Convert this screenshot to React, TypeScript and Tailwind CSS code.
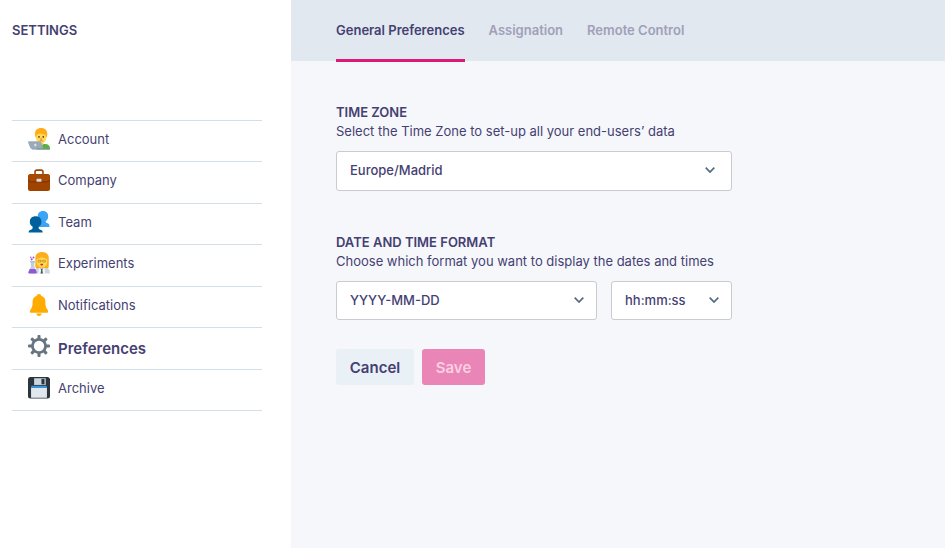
import type { ReactNode } from 'react';

function AccountIcon() {
  return (
    <svg viewBox="0 0 36 36" className="size-[22px]" aria-hidden="true">
      <path fill="#5BAF45" d="M14 34v-3c0-4 4-5 7-5h7c5 0 8 3 8 7v2H14z" />
      <path fill="#F9CA55" d="M18 22h7v5c0 2-7 2-7 0z" />
      <path fill="#FFD94F" d="M13 10c0-6 4-8 8.500-8S30 4 30 10v5c0 6-4 10-8.500 10S13 21 13 15z" />
      <path fill="#FFAC1A" d="M21.500 0C15 0 11.500 4 11.500 9c0 4 .5 5 1.500 7 .5-2 .5-4 2-5 1-1 3-1 5-2 3 1.500 6 1 8 2 1 1 1.500 3 2 5 1-2 1.500-3 1.500-7 0-5-3.500-9-10-9z" />
      <path fill="#662113" d="M17 13h2v3h-2zm7 0h2v3h-2z" />
      <path fill="none" stroke="#C1694F" strokeWidth="1.300" d="M20 18h3m-4 3.500c1-1 4-1 5 0" />
      <path fill="#9AAAB8" d="M0 23.500C0 22 1 21.500 2 21.500h17c1.500 0 2 .5 2.300 1.500L25 34H7c-2 0-3-.5-3.500-2z" />
      <path fill="#7F8F9D" d="M5 33.500h30c1.300 0 1.300 1.500 0 1.500H7z" />
      <ellipse cx="12" cy="28" rx="1.800" ry="2.200" fill="#E1E8ED" />
    </svg>
  );
}

function CompanyIcon() {
  return (
    <svg viewBox="0 0 36 36" className="size-[22px]" aria-hidden="true">
      <path fill="none" stroke="#9B4504" strokeWidth="2.600" d="M11.500 9V5c0-2 1-3.200 3-3.200h7c2 0 3 1.200 3 3.200v4" />
      <path fill="#9F4300" d="M4 8h28c3 0 4 2 4 4v20c0 3-1 4-4 4H4c-3 0-4-1-4-4V12c0-2 1-4 4-4z" />
      <path fill="#A84A02" d="M4 9h28c2 0 3 1 3 3v5c-1 3-3 3.500-7 3.500H8c-4 0-6-.5-7-3.500v-5c0-2 1-3 3-3z" />
      <path fill="none" stroke="#7A3100" strokeWidth="1.600" d="M0 17.500c2 3.500 4 3.500 8 3.500h20c4 0 6 0 8-3.500" />
      <rect x="14" y="16" width="8" height="5" rx="1" fill="#D5DCE1" />
    </svg>
  );
}

function TeamIcon() {
  return (
    <svg viewBox="0 0 36 36" className="size-[22px]" aria-hidden="true">
      <path fill="#3BA4F5" d="M24.500 0C19 0 16 3.500 16 8.500c0 4 1.500 6.500 4 8V20c0 2-1 3.500-4 4v2h19v-2c0-3-2-4-4.500-4.500-1-.3-1.500-1-1.500-3 2.500-1.500 4-4 4-8C33 3.500 30 0 24.500 0z" />
      <path fill="#00609E" d="M12.500 8.500C6.500 8.500 3 12 3 17.500c0 4 1.500 6.500 4.500 8V28c0 1.500-.8 2-2.500 2.500-2.500.6-4 1.500-4 4.500h23c0-3-1.500-4-4-4.500-1.800-.5-2.500-1-2.500-2.500v-2.500c3-1.500 4.500-4 4.500-8 0-5.500-3.500-9-9.500-9z" />
    </svg>
  );
}

function ExperimentsIcon() {
  return (
    <svg viewBox="0 0 36 36" className="size-[22px]" aria-hidden="true">
      <path fill="#FFAC1A" d="M23 0c6.500 0 11 4 11 10v13c0 4-2 5-5 5H16c-3 0-4-2-4-5V10C12 4 16 0 23 0z" />
      <path fill="#CCD6DD" d="M11 35v-3c0-4 3-6 7-6h11c4.500 0 6.500 3 6.500 6v3z" />
      <path fill="#FFD94F" d="M14 12c2-1 5-3 9-3 3.500 0 6 2 8.500 3v4c0 6-4 9.500-8.500 9.500S14 22 14 16z" />
      <path fill="none" stroke="#B77A25" d="M16.500 13.500h4v3h-4zm8 0h4v3h-4zm-4 1h4" />
      <path fill="#DF1F32" d="M20 20c1-1 4-1 5 0-1 3-4 3-5 0z" />
      <path fill="#F5F8FA" d="m18 26 4.500 3 4.500-3 1 9H17z" />
      <path fill="#50545F" d="m20.500 27 2 1 2-1-1 3 1 5h-4l1-5z" />
      <path fill="#BFCFDF" d="M4.500 16h6v9l4 8c0 1-1 2-2 2H2.500c-2 0-2-1-2-2l4-8z" />
      <path fill="#9256D9" d="M3 28h9l2.500 5c0 1-1 2-2 2H2.500c-2 0-2-1-2-2z" />
      <path fill="#A9B9C7" d="M3.500 15h8v2h-8z" />
      <g fill="#9B51D8"><circle cx="6" cy="12" r="1.800" /><circle cx="9" cy="9" r="1.500" /><circle cx="4.500" cy="8.500" r="1.200" /></g>
    </svg>
  );
}

function BellIcon() {
  return (
    <svg viewBox="0 0 36 36" className="size-[22px]" aria-hidden="true">
      <path fill="#FFAC00" d="M18 0c-2 0-3.500 1.300-3.500 3-5 1.500-7 5-7 10 0 8-1.500 10-3 12-1 1.500-1.500 2.500-1.500 3.500 0 1.300 1 2 2 2h26c1 0 2-.7 2-2 0-1-.5-2-1.500-3.500-1.500-2-3-4-3-12 0-5-2-8.500-7-10 0-1.700-1.500-3-3.500-3zM13.500 32h9c-.3 2.300-2 4-4.500 4s-4.200-1.700-4.500-4z" />
    </svg>
  );
}

function GearIcon() {
  return (
    <svg viewBox="0 0 36 36" className="size-[22px]" aria-hidden="true">
      <g fill="#66757F">
        <rect x="15.500" width="5" height="36" rx="1.500" />
        <rect x="15.500" width="5" height="36" rx="1.500" transform="rotate(45 18 18)" />
        <rect x="15.500" width="5" height="36" rx="1.500" transform="rotate(90 18 18)" />
        <rect x="15.500" width="5" height="36" rx="1.500" transform="rotate(135 18 18)" />
        <circle cx="18" cy="18" r="13" />
      </g>
      <circle cx="18" cy="18" r="8.500" fill="#fff" />
    </svg>
  );
}

function ArchiveIcon() {
  return (
    <svg viewBox="0 0 36 36" className="size-[22px]" aria-hidden="true">
      <path fill="#2D353C" d="M4 0h29l3 3v28c0 3-1.500 4-4 4H4c-2.500 0-4-1-4-4V4c0-2.500 1.500-4 4-4z" />
      <path fill="#CCD6DD" d="M10 2h19v11H10z" />
      <path fill="#2D353C" d="M22 3h5v9h-5z" />
      <path fill="#E1E8ED" d="M5 17h26v17H5z" />
      <path fill="#3B94D9" d="M6 14.500h24l1 1V18H5v-2.500z" />
    </svg>
  );
}

const navItems: { label: string; icon: ReactNode }[] = [
  { label: 'Account', icon: <AccountIcon /> },
  { label: 'Company', icon: <CompanyIcon /> },
  { label: 'Team', icon: <TeamIcon /> },
  { label: 'Experiments', icon: <ExperimentsIcon /> },
  { label: 'Notifications', icon: <BellIcon /> },
  { label: 'Preferences', icon: <GearIcon /> },
  { label: 'Archive', icon: <ArchiveIcon /> },
];

const tabs = ['General Preferences', 'Assignation', 'Remote Control'];

function SelectBox({ id, labelledBy, value, className, chevronClass }: {
  id: string;
  labelledBy: string;
  value: string;
  className: string;
  chevronClass: string;
}) {
  return (
    <div className={`relative ${className}`}>
      <select
        id={id}
        aria-labelledby={labelledBy}
        defaultValue={value}
        className="block size-full appearance-none rounded-[3px] border border-[#c9cbd0] bg-white px-[13px] text-[13px] font-medium text-[#453f72]"
      >
        <option>{value}</option>
      </select>
      <svg viewBox="0 0 10 6" className={`pointer-events-none absolute top-4 h-[6px] w-[10px] ${chevronClass}`} fill="none" stroke="#536a82" strokeWidth="1.700" aria-hidden="true">
        <path d="m.7.7 4.300 4.300L9.300.7" />
      </svg>
    </div>
  );
}

export default function App() {
  return (
    <div className="flex min-h-screen bg-white font-['Inter','Liberation_Sans',sans-serif] text-[#453f72]">
      <aside className="w-[291px] shrink-0 pr-[29px] pl-3">
        <h1 className="pt-5 text-[13px] leading-5 font-semibold">SETTINGS</h1>
        <nav className="mt-20">
          <ul className="border-b border-[#d3dee6]">
            {navItems.map(({ label, icon }) => (
              <li key={label} className="h-[41px] border-t border-[#d3dee6] even:h-[42px]">
                <a
                  href="#"
                  aria-current={label === 'Preferences' ? 'page' : undefined}
                  className="group flex items-start gap-2 pt-[7px] pl-4"
                >
                  {icon}
                  <span className="pt-px text-[13px] leading-5 group-aria-[current=page]:pt-1 group-aria-[current=page]:text-[15px] group-aria-[current=page]:font-semibold">
                    {label}
                  </span>
                </a>
              </li>
            ))}
          </ul>
        </nav>
      </aside>

      <main className="min-w-0 flex-1 bg-[#f5f7fb]">
        <nav className="flex h-[61px] gap-6 bg-[#e1e8ef] pl-[45px]">
          {tabs.map((tab, i) => (
            <a
              key={tab}
              href="#"
              aria-current={i === 0 ? 'page' : undefined}
              className="h-[62px] pt-5 text-[13px] leading-5 font-semibold whitespace-nowrap text-[#a19fb9] aria-[current=page]:border-b-3 aria-[current=page]:border-[#dc1878] aria-[current=page]:text-[#453f72]"
            >
              {tab}
            </a>
          ))}
        </nav>

        <form className="px-[45px] pt-[42px]">
          <section>
            <h2 id="tz-title" className="text-[13px] leading-[19px] font-semibold">TIME ZONE</h2>
            <label htmlFor="tz" className="block text-[13px] leading-[19px]">
              Select the Time Zone to set-up all your end-users’ data
            </label>
            <SelectBox id="tz" labelledBy="tz-title" value="Europe/Madrid" className="mt-[10px] h-10 max-w-[396px]" chevronClass="right-[17px]" />
          </section>

          <section className="mt-[42px]">
            <h2 id="format-title" className="text-[13px] leading-[19px] font-semibold">DATE AND TIME FORMAT</h2>
            <label htmlFor="date-format" className="block text-[13px] leading-[19px]">
              Choose which format you want to display the dates and times
            </label>
            <div className="mt-[10px] flex max-w-[396px] gap-[14px]">
              <SelectBox id="date-format" labelledBy="format-title" value="YYYY-MM-DD" className="h-[39px] flex-1" chevronClass="right-[13px]" />
              <SelectBox id="time-format" labelledBy="format-title" value="hh:mm:ss" className="h-[39px] w-[121px]" chevronClass="right-[13px]" />
            </div>
          </section>

          <div className="mt-[29px] flex gap-2">
            <button type="button" className="h-9 w-[78px] rounded-[3px] bg-[#e9f0f6] pt-0.5 text-[15px] font-semibold">Cancel</button>
            <button type="button" disabled className="h-9 w-[63px] rounded-[3px] bg-[#e985b7] pt-0.5 text-[15px] font-semibold text-[#fbcfe3]">Save</button>
          </div>
        </form>
      </main>
    </div>
  );
}
